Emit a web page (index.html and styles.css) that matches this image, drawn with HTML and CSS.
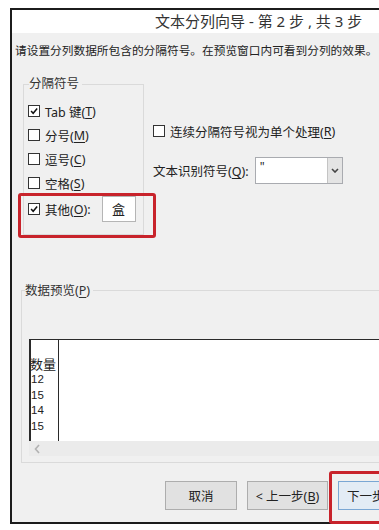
FILE: index.html
```html
<!DOCTYPE html>
<html lang="zh-CN">

<head>
    <meta charset="UTF-8">
    <meta name="viewport" content="width=device-width, initial-scale=1.0">
    <title>文本分列向导</title>
    <link rel="stylesheet" href="styles.css">
</head>

<body>
    <div class="dialog">
        <div class="titlebar">文本分列向导 - 第 2 步 , 共 3 步</div>
        <div class="panel">
            <p class="intro">请设置分列数据所包含的分隔符号。在预览窗口内可看到分列的效果。</p>

            <div class="options">
                <!-- 分隔符号 -->
                <div class="group delims">
                    <div class="group-title">分隔符号</div>
                    <div class="check-list">
                        <label class="check">
                            <span class="box"><svg viewBox="0 0 12 12"><polyline points="2.5,6 5,8.8 9.8,3" /></svg></span>
                            Tab 键(<u>T</u>)
                        </label>
                        <label class="check"><span class="box"></span>分号(<u>M</u>)</label>
                        <label class="check"><span class="box"></span>逗号(<u>C</u>)</label>
                        <label class="check"><span class="box"></span>空格(<u>S</u>)</label>
                        <div class="check other-row mark">
                            <span class="box"><svg viewBox="0 0 12 12"><polyline points="2.5,6 5,8.8 9.8,3" /></svg></span>
                            其他(<u>O</u>):
                            <span class="textbox">盒</span>
                        </div>
                    </div>
                </div>

                <div class="side">
                    <label class="check"><span class="box"></span>连续分隔符号视为单个处理(<u>R</u>)</label>
                    <div class="qualifier">
                        <span>文本识别符号(<u>Q</u>):</span>
                        <div class="select">
                            <span class="select-value">"</span>
                            <span class="select-arrow"><svg viewBox="0 0 8 5"><polyline points="1,1 4,4 7,1" /></svg></span>
                        </div>
                    </div>
                </div>
            </div>

            <!-- 数据预览 -->
            <div class="group preview">
                <div class="group-title">数据预览(<u>P</u>)</div>
                <div class="preview-box">
                    <div class="preview-col">
                        <div class="col-head">数量</div>
                        <div class="col-cell">12</div>
                        <div class="col-cell">15</div>
                        <div class="col-cell">14</div>
                        <div class="col-cell">15</div>
                    </div>
                </div>
                <div class="hscroll">
                    <svg viewBox="0 0 6 10"><polyline points="5,1 1.5,5 5,9" /></svg>
                </div>
            </div>

            <div class="buttons">
                <button type="button" class="btn btn-cancel">取消</button>
                <button type="button" class="btn btn-back">&lt; 上一步(<u>B</u>)</button>
                <button type="button" class="btn btn-next mark">下一步</button>
            </div>
        </div>
    </div>
</body>

</html>
```

FILE: styles.css
```css
* {
    margin: 0;
    padding: 0;
    box-sizing: border-box;
}

html,
body {
    overflow: hidden;
}

body {
    background: #fff;
    font-family: "Noto Sans", "Noto Sans CJK SC", sans-serif;
    color: #222;
}

u {
    text-decoration: underline;
    text-underline-offset: 2px;
}

.dialog {
    width: 420px;
    margin: 8px 0 0 10px;
    border-top: 2px solid #1c1c1c;
    border-left: 2px solid #1c1c1c;
    border-bottom: 2px solid #1c1c1c;
}

.titlebar {
    height: 23px;
    line-height: 22px;
    padding-left: 143px;
    font-size: 15px;
    color: #333;
    background: #fff;
    white-space: nowrap;
}

.panel {
    height: 489px;
    background: #f0f0f0;
}

.intro {
    padding: 9px 0 0 3px;
    line-height: 16px;
    font-size: 11.7px;
    white-space: nowrap;
}

/* 上半部分 */
.options {
    display: flex;
    align-items: flex-start;
    gap: 9px;
    padding: 26px 0 0 11px;
}

.group {
    border: 1px solid #dadada;
}

.group-title {
    width: fit-content;
    line-height: 18px;
    font-size: 12.5px;
    padding-right: 3px;
    background: #f0f0f0;
    color: #333;
}

.delims {
    width: 121px;
    padding: 0 7px 11px 4px;
}

.delims .group-title {
    margin: -10px 0 0 1px;
}

.check-list {
    margin-top: 6px;
}

.check {
    display: flex;
    align-items: center;
    height: 24px;
    font-size: 12.5px;
    white-space: nowrap;
}

.box {
    width: 12px;
    height: 12px;
    margin-right: 5px;
    border: 1px solid #333;
    background: #fff;
    flex: none;
}

.box svg {
    display: block;
    width: 10px;
    height: 10px;
    fill: none;
    stroke: #111;
    stroke-width: 1.8;
}

.other-row {
    height: 28px;
    position: relative;
}

.textbox {
    margin-left: auto;
    width: 34px;
    height: 26px;
    line-height: 24px;
    padding-left: 9px;
    border: 1px solid #b5b5b5;
    background: #fff;
    font-size: 13px;
}

.mark::after {
    content: "";
    position: absolute;
    border: 3px solid #c8232b;
    border-radius: 3px;
    pointer-events: none;
}

.other-row::after {
    left: -10px;
    right: -20px;
    top: -2px;
    bottom: -15px;
}

.side {
    padding-top: 35px;
}

.qualifier {
    display: flex;
    align-items: center;
    gap: 6px;
    margin-top: 14px;
    font-size: 12.5px;
    white-space: nowrap;
}

.select {
    display: flex;
    width: 88px;
    height: 27px;
    border: 1px solid #a9abb0;
    background: #fff;
}

.select-value {
    flex: 1;
    padding: 2px 0 0 4px;
    font-size: 12px;
    line-height: 14px;
}

.select-arrow {
    width: 15px;
    display: flex;
    align-items: center;
    justify-content: center;
    background: #e4e4e4;
    border-left: 1px solid #c4c4c4;
}

.select-arrow svg {
    width: 8px;
    height: 5px;
    fill: none;
    stroke: #444;
    stroke-width: 1.6;
}

/* 数据预览 */
.preview {
    margin: 55px 0 0 9px;
    border-right: none;
    padding-bottom: 6px;
}

.preview .group-title {
    margin: -9px 0 0 3px;
}

.preview-box {
    margin: 39px 0 0 7px;
    height: 102px;
    background: #fff;
    border-top: 1px solid #2a2a2a;
    border-left: 2px solid #2a2a2a;
}

.preview-col {
    width: 28px;
    height: 100%;
    padding-top: 16px;
    border-right: 1px solid #2a2a2a;
}

.col-head {
    line-height: 16px;
    font-size: 13px;
    margin-left: -1px;
}

.col-cell {
    line-height: 15.5px;
    font-size: 11.5px;
    font-family: "Liberation Sans", sans-serif;
}

.hscroll {
    margin-left: 7px;
    height: 15px;
    padding: 3px 0 0 5px;
    background: #ebebeb;
}

.hscroll svg {
    display: block;
    width: 6px;
    height: 10px;
    fill: none;
    stroke: #b2b2b2;
    stroke-width: 1.6;
}

/* 按钮 */
.buttons {
    display: flex;
    gap: 10px;
    margin-top: 18px;
    padding-left: 153px;
}

.btn {
    height: 29px;
    border: 1px solid #adadad;
    background: #e1e1e1;
    font-family: inherit;
    font-size: 12.5px;
    color: #222;
    white-space: nowrap;
}

.btn-cancel {
    width: 72px;
}

.btn-back {
    width: 81px;
}

.btn-next {
    width: 81px;
    position: relative;
    text-align: left;
    padding-left: 8px;
    border-color: #7aa7d4;
    background: #e3ecf5;
}

.btn-next::after {
    left: -10px;
    right: -10px;
    top: -11px;
    bottom: -15px;
}
```
